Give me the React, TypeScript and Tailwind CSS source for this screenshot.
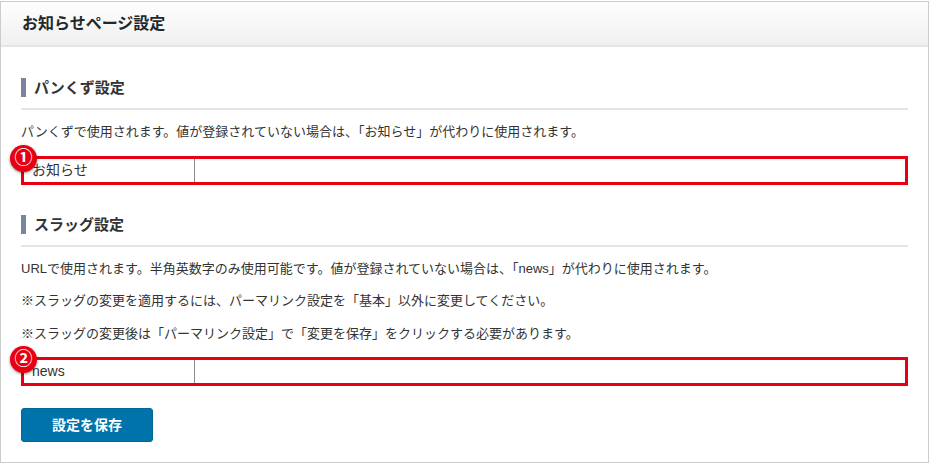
const font = "font-['Liberation_Sans','Noto_Sans_CJK_JP',sans-serif]";

function SectionHeading({ label }: { label: string }) {
  return (
    <div className="border-b-2 border-[#e5e5e5] pb-[11px]">
      <div className="flex h-[19px] items-center gap-[8px]">
        <span className="h-[19px] w-[5px] bg-[#7b849e]" />
        <h3 className="text-[15px] font-bold leading-[19px] text-[#333]">{label}</h3>
      </div>
    </div>
  );
}

function MarkedField({ mark, value }: { mark: string; value: string }) {
  return (
    <div className="relative">
      <div className="flex h-[29px] border-[3px] border-[#e60012] bg-white">
        <div className="flex w-[171px] items-center border-r border-[#8c8c8c] pl-[8px] text-[14px] text-[#333]">
          {value}
        </div>
        <div className="flex-1" />
      </div>
      {/* 注釈バッジ */}
      <span className="absolute left-[-11px] top-[-11px] flex h-[27px] w-[27px] items-center justify-center rounded-full bg-[#e60012] pb-[2px] text-[18px] font-bold leading-none text-white shadow-[0_1px_3px_rgba(0,0,0,0.45)]">
        {mark}
      </span>
    </div>
  );
}

export default function App() {
  return (
    <div className={`${font} min-h-[463px] bg-white pt-px`}>
      <div className="border border-[#ccc] bg-white">
        <div className="flex h-[45px] items-center border-b-2 border-[#e5e5e5] bg-gradient-to-b from-[#fefefe] to-[#f0f0f0] px-[21px]">
          <h2 className="text-[16px] font-bold text-[#23282d]">お知らせページ設定</h2>
        </div>

        <div className="px-[20px] pb-[20px] pt-[31px]">
          <SectionHeading label="パンくず設定" />
          <p className="mt-[12px] text-[13px] leading-[20px] text-[#333]">
            パンくずで使用されます。値が登録されていない場合は、「お知らせ」が代わりに使用されます。
          </p>
          <div className="mt-[14px]">
            <MarkedField mark="①" value="お知らせ" />
          </div>

          <div className="mt-[30px]">
            <SectionHeading label="スラッグ設定" />
          </div>
          <p className="mt-[12px] text-[13px] leading-[20px] text-[#333]">
            URLで使用されます。半角英数字のみ使用可能です。値が登録されていない場合は、「news」が代わりに使用されます。
          </p>
          <p className="mt-[12px] text-[13px] leading-[20px] text-[#333]">
            ※スラッグの変更を適用するには、パーマリンク設定を「基本」以外に変更してください。
          </p>
          <p className="mt-[13px] text-[13px] leading-[20px] text-[#333]">
            ※スラッグの変更後は「パーマリンク設定」で「変更を保存」をクリックする必要があります。
          </p>
          <div className="mt-[13px]">
            <MarkedField mark="②" value="news" />
          </div>

          <button
            type="button"
            className="mt-[22px] h-[34px] w-[132px] rounded-[3px] border border-[#006799] bg-[#0073aa] text-[14px] font-bold text-white"
          >
            設定を保存
          </button>
        </div>
      </div>
    </div>
  );
}
